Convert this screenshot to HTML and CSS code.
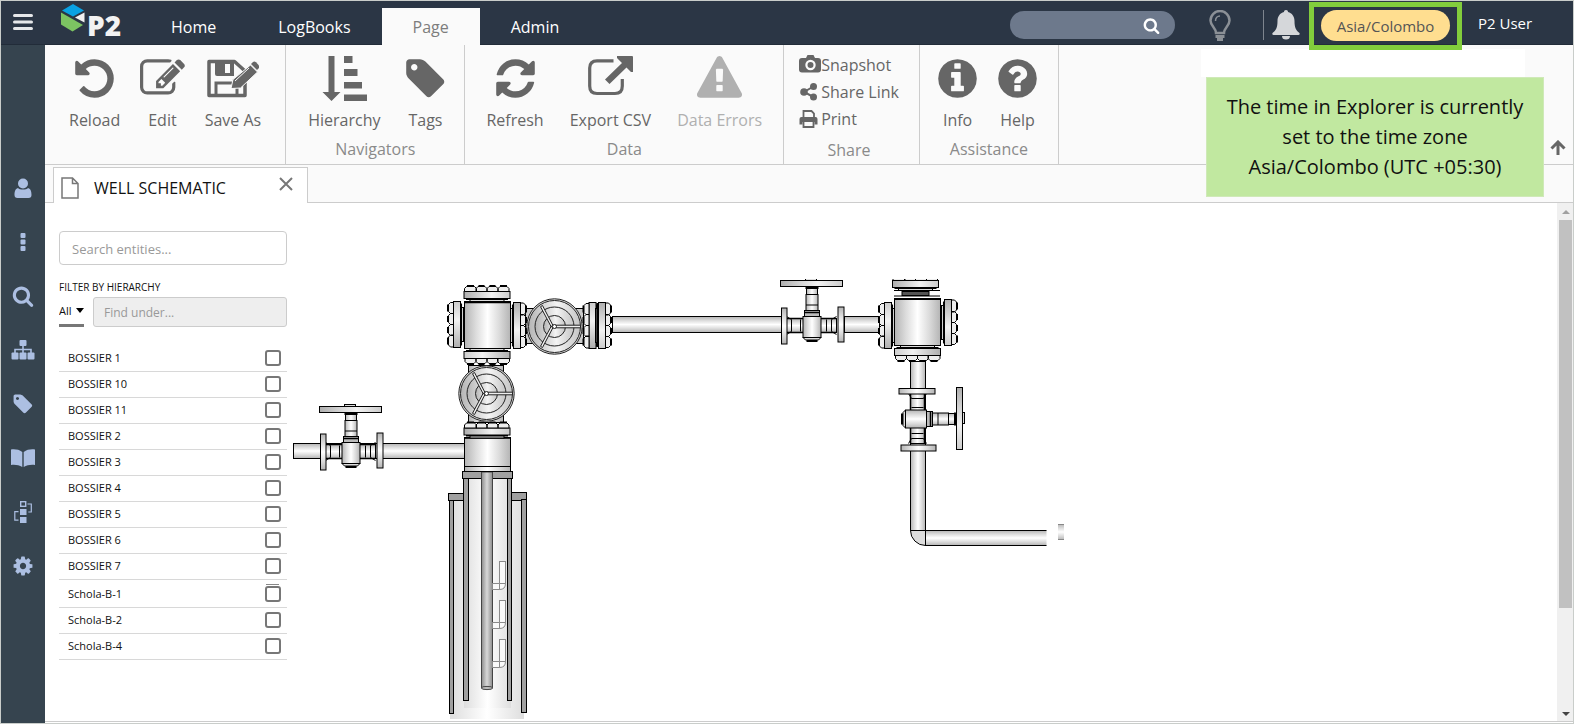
FILE: index.html
```html
<!DOCTYPE html>
<html lang="en">
<head>
<meta charset="utf-8">
<title>P2 Explorer - Well Schematic</title>
<link rel="stylesheet" href="styles.css">
</head>
<body>
<svg class="defs" aria-hidden="true">
  <symbol id="i-search" viewBox="0 0 1792 1792"><path d="M1216 832q0-185-131.5-316.5t-316.5-131.5-316.5 131.5-131.5 316.5 131.5 316.5 316.5 131.5 316.5-131.5 131.5-316.5zm512 832q0 52-38 90t-90 38q-54 0-90-38l-343-342q-179 124-399 124-143 0-273.5-55.5t-225-150-150-225-55.5-273.5 55.5-273.5 150-225 225-150 273.5-55.5 273.5 55.5 225 150 150 225 55.5 273.5q0 220-124 399l343 343q37 37 37 90z"/></symbol>
  <symbol id="i-tag" viewBox="0 0 1792 1792"><path d="M576 448q0-53-37.5-90.5t-90.5-37.5-90.5 37.5-37.5 90.5 37.5 90.5 90.5 37.5 90.5-37.5 37.5-90.5zm1067 576q0 53-37 90l-491 492q-39 37-91 37-53 0-90-37l-715-716q-38-37-64.500-101t-26.500-117v-416q0-52 38-90t90-38h416q53 0 117 26.500t102 64.500l715 714q37 39 37 91z"/></symbol>
</svg>
<div class="app">
  <header class="topbar">
    <button class="burger" aria-label="Menu"><svg width="20" height="17" viewBox="0 0 20 17"><path d="M1.500 1.500h17M1.500 8h17M1.500 14.500h17" stroke="#e6e8ea" stroke-width="3" stroke-linecap="round"/></svg></button>
    <a class="logo" href="#" aria-label="P2">
      <svg width="24" height="28" viewBox="0 0 24 28">
        <path d="M12 0 23 6.500 12 12.500 1 6.500z" fill="#0aa2e3"/>
        <path d="M0 8.500 22 21 11.500 27.500 0 20.500z" fill="#7cc462"/>
        <path d="M23.500 8.500v10L14 13.500z" fill="#f2f2f2"/>
      </svg>
      <span>P2</span>
    </a>
    <nav class="menu">
      <a href="#">Home</a><a href="#">LogBooks</a><a href="#" class="on">Page</a><a href="#">Admin</a>
    </nav>
    <div class="right">
      <div class="find"><input type="text" aria-label="Search"><svg width="17" height="17"><use href="#i-search"/></svg></div>
      <button class="bulb" aria-label="Tips"><svg width="24" height="32" viewBox="0 0 24 32" fill="none" stroke="#8b9096" stroke-width="2.500"><path d="M8 23c0-5-5.500-7-5.500-12.500a9.500 9.500 0 0 1 19 0C21.500 16 16 18 16 23z"/><path d="M7.500 11c0-3 2-5 4.500-5" stroke-width="1.500"/><path d="M7.500 26.500h9M9 29.500h6" stroke-width="3"/></svg></button>
      <span class="rule"></span>
      <button class="bell" aria-label="Notifications"><svg width="28" height="30" viewBox="0 0 28 30" fill="#d5d7da"><path d="M14 0c1.300 0 2 .8 2 2 4 1 6.500 4.500 6.500 9 0 6.500 1.500 9.500 5 12 .5 1 0 2-1 2h-25c-1 0-1.500-1-1-2 3.500-2.500 5-5.500 5-12 0-4.500 2.500-8 6.500-9 0-1.200.7-2 2-2z"/><path d="M10 26h8a4 3.500 0 0 1-8 0z"/></svg></button>
      <div class="zone-box"><button class="zone">Asia/Colombo</button></div>
      <a class="user" href="#">P2 User</a>
    </div>
    <div class="blank"></div>
    <div class="tip" role="tooltip">The time in Explorer is currently set to the time zone Asia/Colombo (UTC +05:30)</div>
  </header>

  <aside class="side">
    <button aria-label="User"><svg width="18" height="20" viewBox="0 0 18 20"><circle cx="9" cy="5.500" r="5"/><path d="M4 10c1.500 2 8.500 2 10 0 3 1 3.500 4 3.500 7 0 2-1 3-3 3h-11c-2 0-3-1-3-3 0-3 .5-6 3.500-7z"/></svg></button>
    <button aria-label="More"><svg width="6" height="18" viewBox="0 0 6 18"><rect x=".5" width="5" height="5" rx="1"/><rect x=".5" y="6.500" width="5" height="5" rx="1"/><rect x=".5" y="13" width="5" height="5" rx="1"/></svg></button>
    <button aria-label="Search"><svg width="22" height="22"><use href="#i-search"/></svg></button>
    <button aria-label="Hierarchy"><svg width="24" height="20" viewBox="0 0 24 20"><rect x="8.500" width="7" height="6" rx="1"/><path d="M12 5v8M4 13V9.500h16V13" fill="none" stroke="#acbfe2" stroke-width="1.600"/><rect x=".5" y="12.500" width="7" height="7" rx="1"/><rect x="8.500" y="12.500" width="7" height="7" rx="1"/><rect x="16.500" y="12.500" width="7" height="7" rx="1"/></svg></button>
    <button aria-label="Tags"><svg width="22" height="22"><use href="#i-tag"/></svg></button>
    <button aria-label="Library"><svg width="24" height="18" viewBox="0 0 24 18"><path d="M0 .5c4-.5 8 0 11.300 2.500v15C8 16 4 15.500 0 16zM24 .5c-4-.5-8 0-11.300 2.500v15C16 16 20 15.500 24 16z"/></svg></button>
    <button aria-label="Processes"><svg width="18" height="22" viewBox="0 0 18 22"><rect x="6.700" y=".7" width="5" height="4.600" fill="none" stroke="#acbfe2" stroke-width="1.400"/><rect x="6" y="8" width="6.500" height="6"/><rect x="6" y="16" width="6.500" height="6"/><path d="M13.500 3h3.800v8h-3M4.500 10.700H.8v8.500h3.700" fill="none" stroke="#acbfe2" stroke-width="1.200"/></svg></button>
    <button aria-label="Settings"><svg width="22" height="22" viewBox="0 0 1792 1792"><path d="M1152 896q0-106-75-181t-181-75-181 75-75 181 75 181 181 75 181-75 75-181zm512-109v222q0 12-8 23t-20 13l-185 28q-19 54-39 91 35 50 107 138 10 12 10 25t-9 23q-27 37-99 108t-94 71q-12 0-26-9l-138-108q-44 23-91 38-16 136-29 186-7 28-36 28h-222q-14 0-24.500-8.500t-11.500-21.500l-28-184q-49-16-90-37l-141 107q-10 9-25 9-14 0-25-11-126-114-165-168-7-10-7-23 0-12 8-23 15-21 51-66.500t54-70.500q-27-50-41-99l-183-27q-13-2-21-12.500t-8-23.500v-222q0-12 8-23t19-13l186-28q14-46 39-92-40-57-107-138-10-12-10-24 0-10 9-23 26-36 98.500-107.500t94.500-71.500q13 0 26 10l138 107q44-23 91-38 16-136 29-186 7-28 36-28h222q14 0 24.500 8.500t11.500 21.500l28 184q49 16 90 37l142-107q9-9 24-9 13 0 25 10 129 119 165 170 7 8 7 22 0 12-8 23-15 21-51 66.500t-54 70.500q26 50 41 98l183 28q13 2 21 12.500t8 23.500z"/></svg></button>
  </aside>

  <main class="main">
    <section class="ribbon">
      <div class="group page-group">
        <div class="tools">
          <button><svg width="45" height="45" viewBox="0 0 1792 1792"><path d="M1664 896q0 156-61 298t-164 245-245 164-298 61q-172 0-327-72.500t-264-204.500q-7-10-6.500-22.500t8.500-20.500l137-138q10-9 25-9 16 2 23 12 73 95 179 147t225 52q104 0 198.500-40.500t163.500-109.500 109.500-163.500 40.500-198.500-40.500-198.500-109.500-163.500-163.500-109.500-198.500-40.500q-98 0-188 35.500t-160 101.500l137 138q31 30 14 69-17 40-59 40h-448q-26 0-45-19t-19-45v-448q0-42 40-59 39-17 69 14l130 129q107-101 244.500-156.500t284.500-55.500q156 0 298 61t245 164 164 245 61 298z"/></svg>Reload</button>
          <button><svg width="45" height="45" viewBox="0 0 1792 1792"><path d="M888 1184l116-116-152-152-116 116v56h96v96h56zm440-720q-16-16-33 1l-350 350q-17 17-1 33t33-1l350-350q17-17 1-33zm80 594v190q0 119-84.500 203.500t-203.500 84.500h-832q-119 0-203.500-84.500t-84.500-203.500v-832q0-119 84.500-203.500t203.500-84.500h832q63 0 117 25 15 7 18 23 3 17-9 29l-49 49q-14 14-32 8-23-6-45-6h-832q-66 0-113 47t-47 113v832q0 66 47 113t113 47h832q66 0 113-47t47-113v-126q0-13 9-22l64-64q15-15 35-7t20 29zm-96-738l288 288-672 672h-288v-288zm444 132l-92 92-288-288 92-92q28-28 68-28t68 28l152 152q28 28 28 68t-28 68z"/></svg>Edit</button>
          <button><svg width="52" height="45" viewBox="0 0 52 45"><path d="M2 5.500h25.500L38 15v24.500H2z" fill="none" stroke="#666" stroke-width="3.500" stroke-linejoin="round"/><path d="M8 5h19v15H10q-2 0-2-2z"/><rect x="18" y="8" width="5" height="9" fill="#fafafa"/><path d="M9 39V27h21v12" fill="none" stroke="#666" stroke-width="3"/><path d="M24 32.500l2-9L43.500 9l7 7-17 16z" stroke="#fafafa" stroke-width="1"/><path d="M28 25l14-13" stroke="#fafafa" stroke-width="1"/><path d="M44 8l2-2q1.500-1 3 .3l3 3.200q1 1.500 0 2.500L50 14z"/></svg>Save As</button>
        </div>
      </div>
      <div class="group">
        <div class="tools">
          <button><svg width="45" height="45" viewBox="0 0 45 45"><path d="M6.500 0h6v36h6L9.500 45 .5 36h6zM22 0h8.500v7H22zM22 13h13.500v7H22zM22 26h18v6.500H22zM22 38.500h23V45H22z"/></svg>Hierarchy</button>
          <button><svg width="45" height="45"><use href="#i-tag"/></svg>Tags</button>
        </div>
        <span class="name">Navigators</span>
      </div>
      <div class="group data-group">
        <div class="tools">
          <button><svg width="45" height="45" viewBox="0 0 1792 1792"><path d="M1639 1056q0 5-1 7-64 268-268 434.500t-478 166.500q-146 0-282.500-55t-243.500-157l-129 129q-19 19-45 19t-45-19-19-45v-448q0-26 19-45t45-19h448q26 0 45 19t19 45-19 45l-137 137q71 66 161 102t187 36q134 0 250-65t186-179q11-17 53-117 8-23 30-23h192q13 0 22.500 9.500t9.500 22.500zm25-800v448q0 26-19 45t-45 19h-448q-26 0-45-19t-19-45 19-45l138-138q-148-137-349-137-134 0-250 65t-186 179q-11 17-53 117-8 23-30 23h-199q-13 0-22.500-9.500t-9.500-22.500v-7q65-268 270-434.500t480-166.500q146 0 284 55.500t245 156.500l130-129q19-19 45-19t45 19 19 45z"/></svg>Refresh</button>
          <button><svg width="45" height="45" viewBox="0 0 45 45"><path d="M25.500 4.800H9Q1.700 4.800 1.700 12v18q0 7.500 7.300 7.500h18q7.300 0 7.300-7.500v-7" fill="none" stroke="#666" stroke-width="3.200"/><path d="M29 0h15q1 0 1 1v15h-2l-4.500-4.500L21.500 28 17 23.500 34 7l-5-5z"/></svg>Export CSV</button>
          <button class="off" disabled><svg width="45" height="45" viewBox="0 0 1792 1792"><path d="M1024 1375v-190q0-14-9.500-23.500t-22.500-9.500h-192q-13 0-22.500 9.500t-9.500 23.500v190q0 14 9.500 23.500t22.500 9.500h192q13 0 22.500-9.500t9.500-23.500zm-2-374l18-459q0-12-10-19-13-11-24-11h-220q-11 0-24 11-10 7-10 21l17 457q0 10 10 16.500t24 6.500h185q14 0 23.500-6.500t10.500-16.500zm-14-934l768 1408q35 63-2 126-17 29-46.500 46t-63.500 17h-1536q-34 0-63.500-17t-46.500-46q-37-63-2-126l768-1408q17-31 47-49t65-18 65 18 47 49z"/></svg>Data Errors</button>
        </div>
        <span class="name">Data</span>
      </div>
      <div class="group share">
        <button><svg width="22" height="22" viewBox="0 0 22 22"><path fill-rule="evenodd" d="M3 4h4l1.500-3h6L16 4h3q3 0 3 3v8.500q0 3-3 3H3q-3 0-3-3V7q0-3 3-3zm8.500 1.800a5 5 0 1 0 0 10.400 5 5 0 0 0 0-10.400zm0 2.200a3 3 0 1 1 0 6 3 3 0 0 1 0-6z"/></svg>Snapshot</button>
        <button><svg width="22" height="22" viewBox="0 0 22 22"><circle cx="5" cy="11" r="3.800"/><circle cx="14.500" cy="5.500" r="3.500"/><circle cx="14.500" cy="16" r="3.500"/><path d="M14.500 5.500 5 11l9.500 5" fill="none" stroke="#666" stroke-width="2"/></svg>Share Link</button>
        <button><svg width="22" height="22" viewBox="0 0 22 22"><path d="M4.500 10V3h8l2.500 2.500V10M4.500 14v5h10v-5" fill="none" stroke="#666" stroke-width="1.800"/><path d="M2.500 9h14q2 0 2 2v5.500h-3V14h-12v2.500H.5V11q0-2 2-2z"/></svg>Print</button>
        <span class="name">Share</span>
      </div>
      <div class="group help-group">
        <div class="tools">
          <button><svg width="45" height="45" viewBox="0 0 1792 1792"><path d="M1152 1376v-160q0-14-9-23t-23-9h-96v-512q0-14-9-23t-23-9h-320q-14 0-23 9t-9 23v160q0 14 9 23t23 9h96v320h-96q-14 0-23 9t-9 23v160q0 14 9 23t23 9h448q14 0 23-9t9-23zm-128-896v-160q0-14-9-23t-23-9h-192q-14 0-23 9t-9 23v160q0 14 9 23t23 9h192q14 0 23-9t9-23zm640 416q0 209-103 385.500t-279.500 279.500-385.500 103-385.500-103-279.500-279.500-103-385.500 103-385.500 279.500-279.500 385.500-103 385.500 103 279.500 279.500 103 385.500z"/></svg>Info</button>
          <button><svg width="45" height="45" viewBox="0 0 1792 1792"><path d="M1024 1376v-192q0-14-9-23t-23-9h-192q-14 0-23 9t-9 23v192q0 14 9 23t23 9h192q14 0 23-9t9-23zm256-672q0-88-55.500-163t-138.500-116-170-41q-243 0-371 213-15 24 8 42l132 100q7 6 19 6 16 0 25-12 53-68 86-92 34-24 86-24 48 0 85.500 26t37.500 59q0 38-20 61t-68 45q-63 28-115.500 86.500t-52.500 125.500v36q0 14 9 23t23 9h192q14 0 23-9t9-23q0-19 21.500-49.500t54.500-49.500q32-18 49-28.500t46-35 44.500-48 28-60.500 12.500-81zm384 192q0 209-103 385.500t-279.500 279.500-385.500 103-385.500-103-279.500-279.500-103-385.500 103-385.500 279.500-279.500 385.500-103 385.500 103 279.500 279.500 103 385.500z"/></svg>Help</button>
        </div>
        <span class="name">Assistance</span>
      </div>
      <button class="fold" aria-label="Collapse ribbon"><svg width="16" height="15" viewBox="0 0 16 15" fill="none" stroke="#666" stroke-width="3"><path d="M8 15V2.500M1.500 8.500 8 2l6.500 6.500"/></svg></button>
    </section>

    <div class="tabs">
      <div class="tab">
        <svg width="18" height="22" viewBox="0 0 18 22" fill="none" stroke="#777" stroke-width="1.500"><path d="M1 1h10.500L17 6.500V21H1zM11.500 1v5.500H17"/></svg>
        <span>WELL SCHEMATIC</span>
        <button aria-label="Close tab"><svg width="14" height="14" viewBox="0 0 14 14" stroke="#777" stroke-width="2"><path d="M1 1l12 12M13 1 1 13"/></svg></button>
      </div>
    </div>

    <div class="work">
      <section class="panel">
        <input class="entity" type="text" placeholder="Search entities..." aria-label="Search entities">
        <label class="caption" for="under">FILTER BY HIERARCHY</label>
        <div class="filter">
          <div class="level"><select aria-label="Level"><option>All</option></select><svg width="8" height="5"><path d="M0 0h8L4 5z"/></svg></div>
          <input id="under" type="text" placeholder="Find under...">
        </div>
        <ul class="list">
          <li><label>BOSSIER 1<input type="checkbox"></label></li>
          <li><label>BOSSIER 10<input type="checkbox"></label></li>
          <li><label>BOSSIER 11<input type="checkbox"></label></li>
          <li><label>BOSSIER 2<input type="checkbox"></label></li>
          <li><label>BOSSIER 3<input type="checkbox"></label></li>
          <li><label>BOSSIER 4<input type="checkbox"></label></li>
          <li><label>BOSSIER 5<input type="checkbox"></label></li>
          <li><label>BOSSIER 6<input type="checkbox"></label></li>
          <li><label>BOSSIER 7<input type="checkbox"></label></li>
          <li class="second"><label>Schola-B-1<input type="checkbox"></label></li>
          <li><label>Schola-B-2<input type="checkbox"></label></li>
          <li><label>Schola-B-4<input type="checkbox"></label></li>
        </ul>
      </section>

      <svg class="schematic" width="790" height="441" viewBox="290 279 790 441" role="img" aria-label="Well schematic">
        <defs>
          <linearGradient id="h"><stop offset="0" stop-color="#b4b4b4"/><stop offset=".25" stop-color="#dcdcdc"/><stop offset=".5" stop-color="#fff"/><stop offset=".75" stop-color="#dcdcdc"/><stop offset="1" stop-color="#b4b4b4"/></linearGradient>
          <linearGradient id="v" x2="0" y2="1"><stop offset="0" stop-color="#b4b4b4"/><stop offset=".25" stop-color="#dcdcdc"/><stop offset=".5" stop-color="#fff"/><stop offset=".75" stop-color="#dcdcdc"/><stop offset="1" stop-color="#b4b4b4"/></linearGradient>
          <linearGradient id="d"><stop offset="0" stop-color="#b4b4b4"/><stop offset=".55" stop-color="#f4f4f4"/><stop offset="1" stop-color="#c4c4c4"/></linearGradient>
          <linearGradient id="f"><stop offset="0" stop-color="#aeaeae"/><stop offset=".6" stop-color="#f2f2f2"/><stop offset="1" stop-color="#ccc"/></linearGradient>
          <linearGradient id="t"><stop offset="0" stop-color="#8c8c8c"/><stop offset=".5" stop-color="#d8d8d8"/><stop offset="1" stop-color="#8c8c8c"/></linearGradient>
          <linearGradient id="w"><stop offset="0" stop-color="#dedede"/><stop offset=".5" stop-color="#fff"/><stop offset="1" stop-color="#dedede"/></linearGradient>
          <g id="bolts" fill="#eee">
            <path d="M-20-12.500h7M-8.500-12.500h6M2.500-12.500h6M13-12.500h7" stroke-width="2"/>
            <path d="M-22.500-7v-3l2-2h8l2 2v3zM-11-7v-3l2-2h7l2 2v3zM0-7v-3l2-2h7l2 2v3zM11-7v-3l2-2h7l2 2v3z"/>
          </g>
          <g id="cap">
            <rect x="-17" y="0" width="34" height="3" fill="#ddd"/><path d="M-21 .8h42" stroke-width="1.500"/>
            <rect x="-23" y="-7" width="46" height="7" fill="url(#f)"/>
            <use href="#bolts"/>
          </g>
          <g id="wheel" stroke="#222">
            <circle r="27.700" fill="#ddd"/><circle r="26" fill="url(#d)"/><circle r="19.500" fill="url(#d)"/><circle r="11" fill="url(#d)"/>
            <path d="M1-1.300h25v2.600H1zM-1.500-1-12-21l-2 1.200L-3.200.5zM-1.500 1-12 21l-2-1.200L-3.200-.5z" fill="#eee"/>
            <circle r="2" fill="#fff"/>
          </g>
          <g id="valve">
            <rect x="-25" y="-7" width="50" height="14" fill="url(#v)"/>
            <path d="M-25-7h50M-25 7h50" stroke-width="1.500"/>
            <path d="M-20-6v12M-11-6v12M15-6v12M20-6v12M-25-9l5 3M-25 9l5-3M25-9l-5 3M25 9l-5-3"/>
            <rect x="-30" y="-17.500" width="5.500" height="36" fill="url(#v)"/>
            <rect x="26.500" y="-18.500" width="6" height="35" fill="url(#v)"/>
            <rect x="-5" y="-37" width="11" height="7" fill="url(#h)"/>
            <rect x="-5.500" y="-31" width="12" height="16" fill="url(#h)"/><path d="M-5.500-20.500h12"/>
            <rect x="-7" y="-15" width="15" height="6" fill="#bbb"/><path d="M-7-13h15" stroke-width="1.500"/>
            <path d="M-6-37.500H7" stroke-width="2"/>
            <rect x="-8.500" y="-9" width="18" height="21" fill="url(#h)"/>
            <path d="M-8.500 12 -6 14.500H7L9.500 12z" fill="#ddd"/><path d="M-5 15.500H6" stroke-width="2"/>
            <rect x="-6" y="-47" width="11" height="2" fill="#ddd"/>
            <rect x="-31" y="-45" width="62" height="6" fill="url(#f)"/>
          </g>
          <g id="mandrel" fill="#fafafa" stroke="#8a8a8a">
            <rect x="499.500" y="561.500" width="6" height="22"/><rect x="492.500" y="583.500" width="7" height="6"/><path d="M499.500 589.500q6 0 6-6h-6z"/>
          </g>
        </defs>
        <g stroke="#000" stroke-width="1">
          <g stroke="none">
            <rect x="450" y="493" width="74" height="226" fill="url(#w)"/>
            <rect x="464" y="479" width="47" height="229" fill="url(#w)"/>
          </g>
          <g fill="#a0a0a0">
            <rect x="448.500" y="493.500" width="15" height="7"/><rect x="449.500" y="500.500" width="4" height="213"/>
            <rect x="511.500" y="492.500" width="15" height="8"/><rect x="521.500" y="499.500" width="5" height="213"/>
            <rect x="463.500" y="478.500" width="5" height="222"/><rect x="507.500" y="478.500" width="4" height="222"/>
            <rect x="462.500" y="471.500" width="50" height="7"/>
          </g>
          <rect x="481.500" y="472" width="11" height="216" fill="url(#t)" stroke="#444"/><ellipse cx="487" cy="688" rx="5.500" ry="1.600" fill="#bbb" stroke="#444"/>
          <use href="#mandrel"/><use href="#mandrel" y="39"/><use href="#mandrel" y="78"/>

          <rect x="293.500" y="443.500" width="171" height="15" fill="url(#v)"/>
          <use href="#valve" transform="translate(350.500 451.500)"/>

          <rect x="464.500" y="437.500" width="46" height="34" fill="url(#h)"/><path d="M464.500 466.500h46M464.500 438.300h46"/>
          <rect x="468.500" y="365.500" width="35" height="57" fill="url(#h)"/>
          <use href="#cap" transform="translate(487 435)"/>
          <use href="#cap" transform="translate(487 351.500) rotate(180)"/>
          <use href="#wheel" transform="translate(486.500 393.500)"/>

          <rect x="525.500" y="308.500" width="58" height="35" fill="#ccc"/>
          <use href="#cap" transform="translate(487 298.500)"/>
          <use href="#cap" transform="translate(460.500 324.500) rotate(-90)"/>
          <use href="#cap" transform="translate(513.500 325.500) rotate(90)"/>
          <rect x="464.500" y="301.500" width="46" height="47" fill="url(#h)"/><path d="M464 302.200h47" stroke-width="2"/>
          <use href="#cap" transform="translate(596 325.500) rotate(-90)"/>
          <use href="#wheel" transform="translate(554.500 326.500)"/>

          <rect x="612.500" y="316.500" width="169" height="16" fill="url(#v)"/>
          <use href="#cap" transform="translate(598.500 325.500) rotate(90)"/>
          <path d="M597.300 303v44" stroke-width="2"/>
          <rect x="844.500" y="316.500" width="35" height="16" fill="url(#v)"/>
          <use href="#valve" transform="translate(811.500 325.500)"/>

          <rect x="910.500" y="361.500" width="15" height="169" fill="url(#h)"/>
          <use href="#cap" transform="translate(891.500 325.500) rotate(-90)"/>
          <use href="#cap" transform="translate(944.500 322.500) rotate(90)"/>
          <use href="#cap" transform="translate(915.500 287.500)"/>
          <path d="M894 290.500h46M894 296h46"/><rect x="902" y="291.500" width="27" height="4" fill="#555"/>
          <use href="#cap" transform="translate(917.500 348.500) rotate(180)"/>
          <rect x="894.500" y="299.500" width="46" height="46" fill="url(#h)"/><path d="M894 299h47" stroke-width="2"/>
          <use href="#valve" transform="translate(917.500 418.500) rotate(90)"/>

          <path d="M910.500 530.500a15 15 0 0 0 15 15v-15z" fill="#ddd"/>
          <rect x="925.500" y="530.500" width="121" height="15" fill="url(#v)" stroke="none"/><path d="M925.500 530.500h121M925.500 545.500h121M925.500 530v16"/>
          <rect x="1058" y="524" width="6" height="16" fill="url(#v)" stroke="none"/><path d="M1058 524.500h6M1058 539.500h6" stroke="#888"/>
        </g>
      </svg>
      <div class="scroll"><svg width="8" height="5"><path d="M0 5h8L4 1z" fill="#a0a0a0"/></svg><i></i><svg width="8" height="5"><path d="M0 0h8L4 4z" fill="#444"/></svg></div>
    </div>
  </main>
</div>
</body>
</html>
```

FILE: styles.css
```css
* { box-sizing: border-box; }

body {
  margin: 0;
  font: 16px/24px "Open Sans", "Noto Sans", sans-serif;
  color: #666;
  background: #fff;
}

button, input, select { font: inherit; color: inherit; }
button { padding: 0; border: 0; background: none; }
a { color: inherit; text-decoration: none; }
svg { display: block; flex: none; }
.defs { position: absolute; width: 0; height: 0; }

.app {
  display: grid;
  grid-template: 44px 1fr / 44px 1fr;
  min-height: 100vh;
  border: 1px solid #c9cdca;
}

/* top bar */
.topbar {
  grid-column: 1 / 3;
  position: relative;
  display: flex;
  background: #2b3645;
  border-bottom: 1px solid #222c39;
  color: #fff;
}
.burger { display: grid; place-items: center; width: 44px; }
.logo { display: flex; width: 78px; padding: 3px 0 0 16px; }
.logo span {
  margin-left: 2px;
  padding-top: 3px;
  color: #f2f2f2;
  font-size: 28px;
  font-weight: 800;
  line-height: 36px;
}
.menu { display: flex; margin-left: 17px; padding-top: 7px; }
.menu a { height: 37px; padding: 7px 31px 0; }
.menu .on { background: #fafafa; color: #7d7d7d; }
.right { display: flex; align-items: flex-start; margin-left: auto; }
.find {
  display: flex;
  align-items: center;
  width: 165px;
  height: 28px;
  margin-top: 10px;
  padding-right: 15px;
  border-radius: 14px;
  background: #6d798c;
}
.find input { flex: 1; min-width: 0; margin-left: 14px; border: 0; background: none; outline: 0; }
.find svg { fill: #fff; }
.bulb { margin: 9px 0 0 33px; }
.rule { width: 1px; height: 30px; margin: 9px 8px 0 31px; background: #7e858e; }
.bell { margin: 9px 9px 0 0; }
.zone-box { margin-top: 1px; padding: 3px 7px 4px; border: 5px solid #82cd3c; z-index: 1; }
.zone { width: 129px; height: 31px; border-radius: 16px; background: #ffde90; color: #555; font-size: 15px; }
.user { width: 111px; padding: 10px 0 0 16px; font-size: 15px; white-space: nowrap; }
.blank { position: absolute; top: 48px; right: 48px; width: 324px; height: 28px; background: #fff; }
.tip {
  position: absolute;
  top: 76px;
  right: 29px;
  width: 338px;
  padding: 14px 16px;
  border: 1px solid #cfe9b8;
  background: #c1e8a0;
  color: #111;
  font-size: 20px;
  line-height: 30px;
  text-align: center;
  z-index: 2;
}

/* side bar */
.side {
  display: flex;
  flex-direction: column;
  padding-top: 116px;
  background: #36444f;
}
.side button { display: grid; place-items: center; height: 54px; }
.side svg { fill: #acbfe2; }

.main { display: flex; flex-direction: column; min-width: 0; }

/* ribbon */
.ribbon {
  display: flex;
  height: 120px;
  background: #fafafa;
  border-bottom: 1px solid #ccc;
}
.group {
  display: flex;
  flex-direction: column;
  padding: 11px 8px 0;
  border-right: 1px solid #ccc;
}
.page-group { padding: 11px 10px 0; }
.help-group { padding: 11px 9px 0; }
.tools { display: flex; }
.tools button {
  display: flex;
  flex-direction: column;
  align-items: center;
  gap: 7px;
  padding: 0 14px;
  white-space: nowrap;
}
.data-group .tools button { padding: 0 13px; }
.tools svg { margin: 0 -12px; }
.group svg { fill: #666; }
.off { color: #b0b0b0; }
.group .off svg { fill: #b0b0b0; }
.name { margin-top: 5px; color: #8a8a8a; text-align: center; }
.share { padding: 6px 20px 0 15px; }
.share button { display: flex; align-items: center; height: 27px; white-space: nowrap; }
.share .name { margin-top: 6px; }
.fold { align-self: flex-end; margin: 0 7px 9px auto; }

/* page tabs */
.tabs {
  display: flex;
  height: 38px;
  padding: 2px 0 0 8px;
  background: #fafafa;
  border-bottom: 1px solid #ccc;
}
.tab {
  display: flex;
  align-items: center;
  width: 255px;
  height: 36px;
  padding: 4px 14px 0 7px;
  border: 1px solid #ccc;
  border-bottom: 0;
  background: #fff;
  color: #111;
}
.tab span { margin-left: 15px; }
.tab button { margin: -8px 0 0 auto; }

/* work area */
.work {
  display: flex;
  flex: 1;
  border-bottom: 1px solid #ccc;
  margin-bottom: 1px;
  color: #111;
}
.panel { width: 242px; padding: 28px 0 0 14px; font-size: 11px; line-height: 16px; }
.panel input::placeholder { color: #999; opacity: 1; }
.entity {
  display: block;
  width: 100%;
  height: 34px;
  padding: 1px 12px 0;
  border: 1px solid #ccc;
  border-radius: 4px;
  font-size: 13px;
}
.caption { display: block; margin-top: 14px; font-size: 10px; }
.filter { display: flex; gap: 9px; margin-top: 2px; }
.level { display: flex; align-items: center; width: 25px; border-bottom: 3px solid #777; }
.level select { width: 17px; padding: 0; border: 0; background: none; appearance: none; }
.filter input {
  flex: 1;
  min-width: 0;
  height: 30px;
  padding: 0 10px;
  border: 1px solid #ccc;
  border-radius: 3px;
  background: #eee;
  font-size: 12px;
}
.list { margin: 19px 0 0; padding: 0; list-style: none; }
.list li { border-bottom: 1px solid #d8d8d8; }
.list label {
  display: flex;
  align-items: center;
  justify-content: space-between;
  height: 25px;
  padding: 0 6px 2px 9px;
}
.list input {
  width: 16px;
  height: 16px;
  margin: 0;
  border: 2px solid #777;
  border-radius: 3px;
  background: #fff;
  appearance: none;
}
.list .second { padding-top: 2px; position: relative; }
.list .second::before {
  content: "";
  position: absolute;
  top: 4px;
  right: 8px;
  width: 13px;
  height: 1px;
  background: #888;
}
.schematic { margin: 76px 0 0 3px; }
.scroll {
  display: flex;
  flex-direction: column;
  align-items: center;
  width: 16px;
  margin-left: auto;
  padding: 6px 1px 4px 2px;
  background: #f0f0f0;
}
.scroll i { width: 13px; height: 388px; margin: 6px 0 auto; background: #c1c1c1; }
```
